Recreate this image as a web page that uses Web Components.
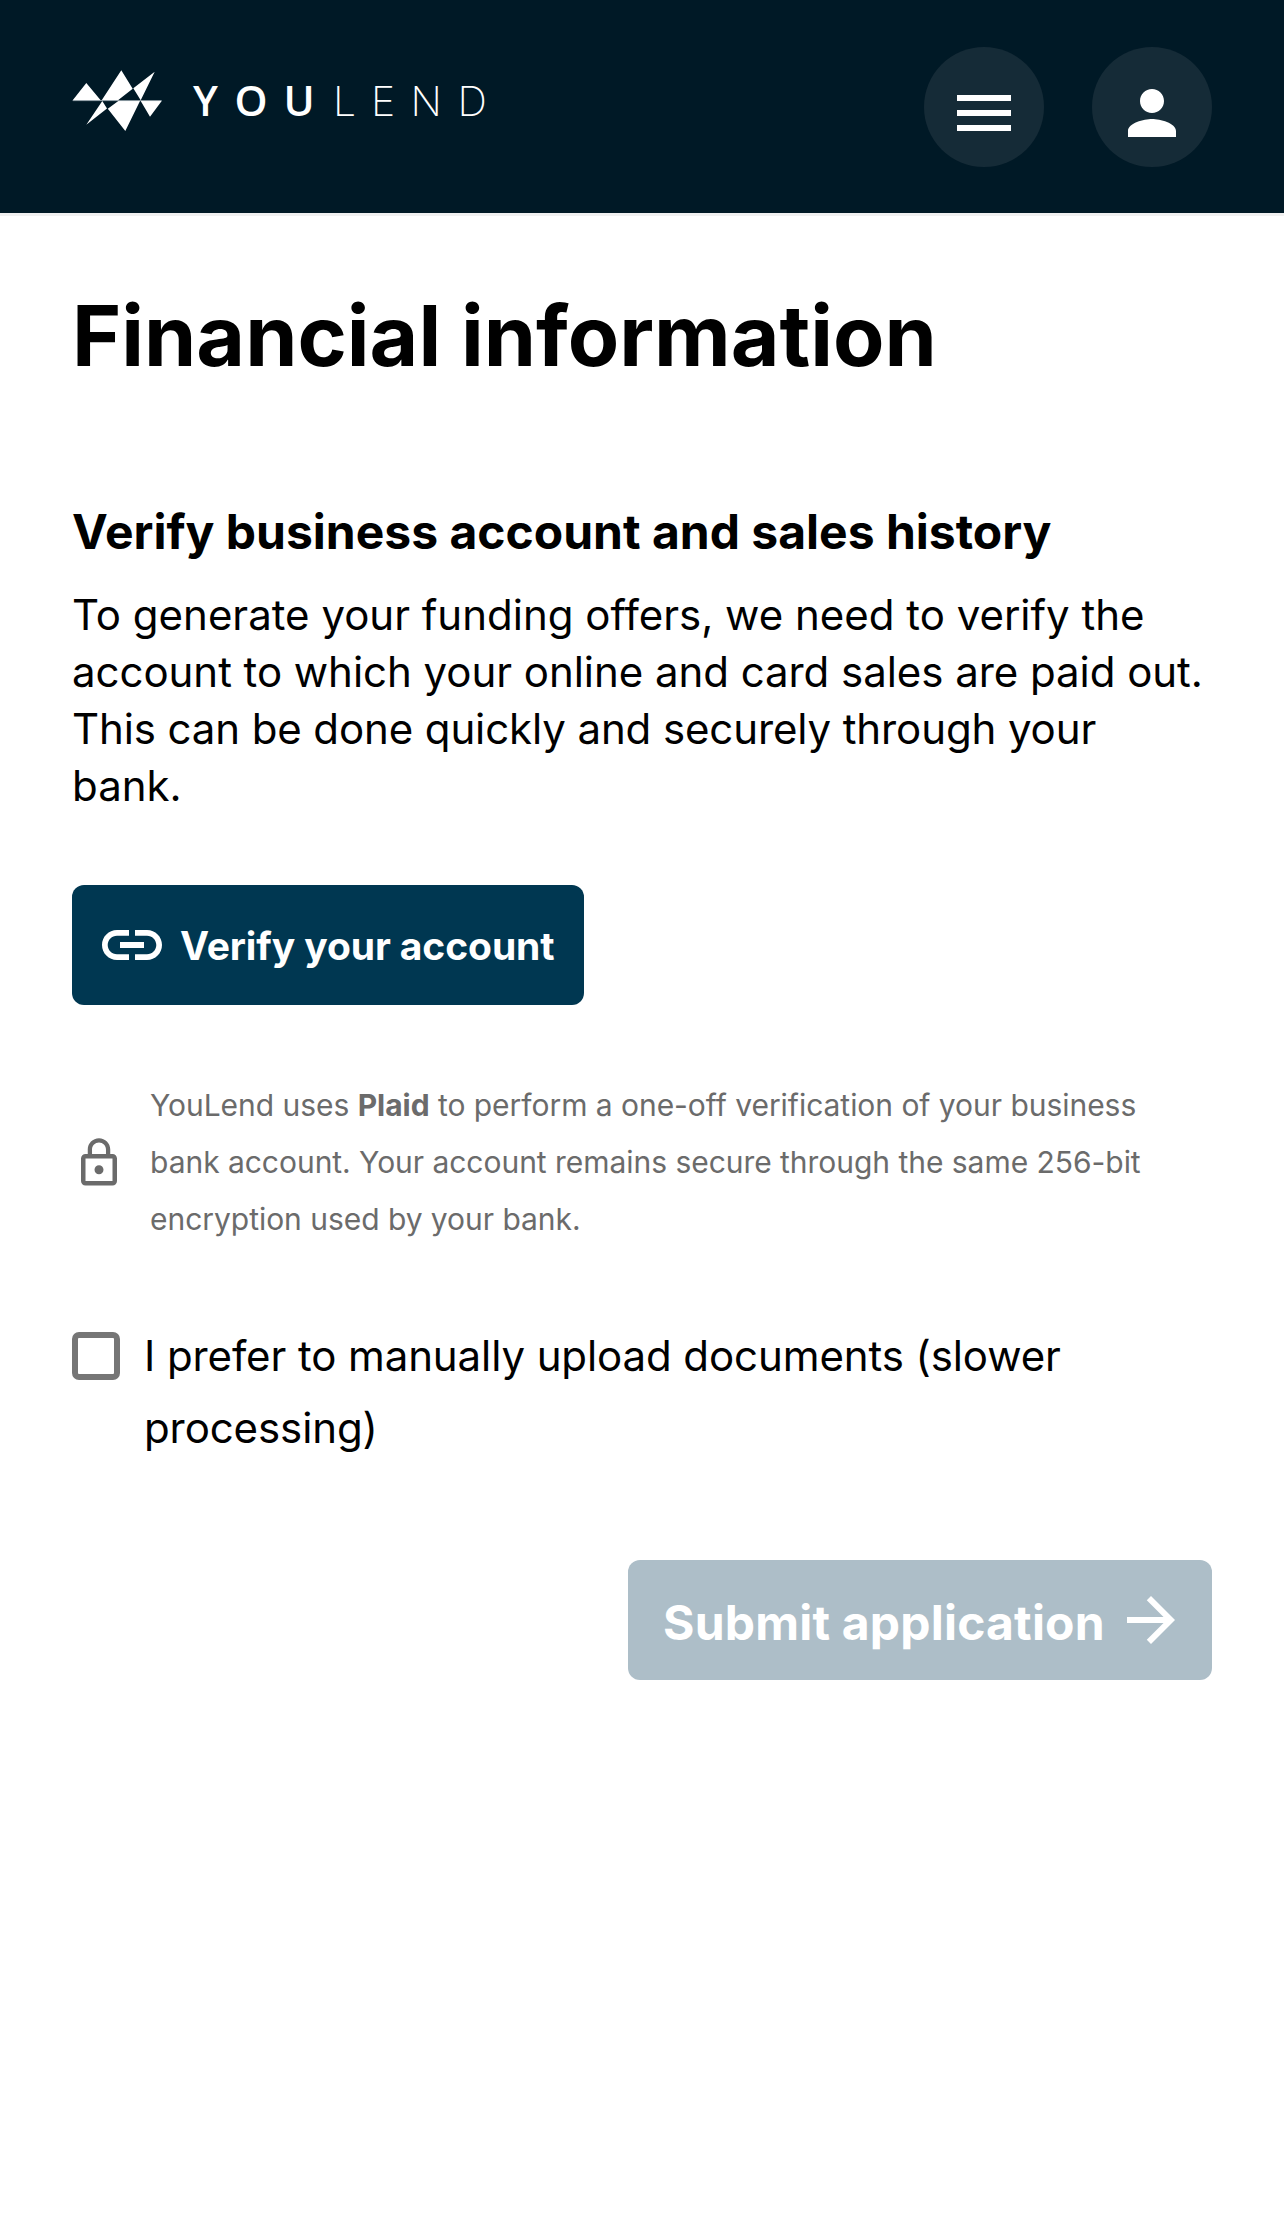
<!DOCTYPE html>
<html lang="en">
<head>
<meta charset="utf-8">
<title>Financial information</title>
<style>
html, body { margin: 0; background: #fff; }
body { font-family: Inter, "Liberation Sans", sans-serif; color: #000; min-height: 2238px; }
</style>
</head>
<body>
<yl-app></yl-app>
<script>
const define = (name, html) => customElements.define(name, class extends HTMLElement {
  constructor() {
    super();
    this.attachShadow({ mode: 'open' }).innerHTML = html;
  }
});

define('yl-logo', `
<style>:host{display:block;width:440px;height:72px} svg{display:block;fill:#fff}</style>
<svg width="440" height="72" viewBox="60 66 440 72" role="img" aria-label="YouLend">
  <path d="M72.7 100.3 86.3 83 100.7 100.3zM101.7 100.3 121.3 70.3 132.7 88.8 118 100.3zM133.3 88.3 154.7 71.7 140.7 100.3zM102.3 101 107 108.5 86.3 124.7zM107.8 108.7 118.3 101 140 101 125.3 131zM140.7 101 161.7 101 150 116.7z"/>
  <path d="M72.7 100.6H161.7" stroke="#b8c3c9" stroke-width=".8"/>
  <text y="115.5" x="193 234.500 283.500" font-family="Open Sans" font-size="42" font-weight="560">YOU</text>
  <text y="115.5" x="333 371 410.5 457.5" font-family="Inter" font-size="41" font-weight="200">LEND</text>
</svg>`);

define('yl-round-button', `
<style>:host{display:flex;box-sizing:border-box;width:120px;height:120px;padding-top:12px;border-radius:50%;background:#152b37;align-items:center;justify-content:center}</style>
<slot></slot>`);

const icons = {
  menu: 'M3 18h18v-2H3v2zm0-5h18v-2H3v2zm0-7v2h18V6H3z',
  person: 'M12 12c2.21 0 4-1.79 4-4s-1.79-4-4-4-4 1.79-4 4 1.79 4 4 4zm0 2c-2.67 0-8 1.34-8 4v2h16v-2c0-2.66-5.33-4-8-4z',
  link: 'M3.9 12c0-1.71 1.39-3.1 3.1-3.1h4V7H7c-2.76 0-5 2.24-5 5s2.24 5 5 5h4v-1.9H7c-1.71 0-3.1-1.39-3.1-3.1zM8 13h8v-2H8v2zm9-6h-4v1.9h4c1.71 0 3.1 1.39 3.1 3.1s-1.39 3.1-3.1 3.1h-4V17h4c2.76 0 5-2.24 5-5s-2.24-5-5-5z',
  lock: 'M12 17c1.1 0 2-.9 2-2s-.9-2-2-2-2 .9-2 2 .9 2 2 2zm6-9h-1V6c0-2.76-2.24-5-5-5S7 3.24 7 6v2H6c-1.1 0-2 .9-2 2v10c0 1.1.9 2 2 2h12c1.1 0 2-.9 2-2V10c0-1.1-.9-2-2-2zM8.9 6c0-1.71 1.39-3.1 3.1-3.1s3.1 1.39 3.1 3.1v2H8.9V6zM18 20H6V10h12v10z',
  arrow: 'M12 4l-1.41 1.41L16.17 11H4v2h12.17l-5.58 5.59L12 20l8-8z'
};
customElements.define('yl-icon', class extends HTMLElement {
  constructor() {
    super();
    this.attachShadow({ mode: 'open' });
  }
  connectedCallback() {
    this.shadowRoot.innerHTML = `<style>:host{display:block;flex:none;width:var(--size,72px);height:var(--size,72px)} svg{display:block;width:100%;height:100%;fill:currentColor}</style>
    <svg viewBox="0 0 24 24"><path d="${icons[this.getAttribute('name')]}"/></svg>`;
  }
});

define('yl-header', `
<style>:host{display:flex;box-sizing:border-box;height:216px;padding:47px 72px 0 60px;background:#001926;border-bottom:3px solid #f0f0f0;color:#fff;justify-content:space-between;align-items:flex-start}
yl-logo{margin-top:19px} nav{display:flex;gap:48px}</style>
<yl-logo></yl-logo>
<nav><yl-round-button><yl-icon name="menu"></yl-icon></yl-round-button><yl-round-button><yl-icon name="person"></yl-icon></yl-round-button></nav>`);

define('yl-button', `
<style>:host{display:flex;box-sizing:border-box;height:120px;border-radius:12px;align-items:center;color:#fff;font-weight:700;white-space:nowrap;width:max-content}</style>
<slot></slot>`);

define('yl-note', `
<style>:host{display:flex;align-items:center;gap:24px;color:#6b6b6b;font-size:30px;line-height:57px;letter-spacing:-.035px;font-weight:420} yl-icon{--size:54px}</style>
<yl-icon name="lock"></yl-icon><div><slot></slot></div>`);

define('yl-checkbox', `
<style>:host{display:flex;gap:24px;font-size:42px;line-height:72px;letter-spacing:-.1px} i{box-sizing:border-box;flex:none;width:48px;height:48px;margin-top:12px;border:6px solid #767676;border-radius:7px}</style>
<i></i><div><slot></slot></div>`);

define('yl-app', `
<style>
:host{display:block}
main{display:flex;flex-direction:column;padding:0 72px}
h1{margin:72px 0 0;font-size:84px;line-height:96px;font-weight:700}
h2{margin:118px 0 0;font-size:48px;line-height:60px;font-weight:700}
p{margin:24px 0 0;font-size:42px;line-height:57px}
.l2{letter-spacing:-.045px} .l3{letter-spacing:-.115px}
.verify{margin-top:71px;background:#003751;padding:0 30px 0 24px;gap:12px;font-size:39px;letter-spacing:-.1px;width:512px}
.verify span{padding-top:1px}
yl-note{margin-top:72px} yl-note span,yl-note b{letter-spacing:inherit}
b{font-weight:700}
yl-checkbox{margin-top:72px}
.submit{margin-top:96px;align-self:flex-end;background:#adbec8;padding:0 25px 0 35px;font-size:48px;letter-spacing:.2px;width:584px;justify-content:space-between}
.submit span{padding-top:4px}
</style>
<yl-header></yl-header>
<main>
<h1>Financial information</h1>
<h2>Verify business account and sales history</h2>
<p>To generate your funding offers, we need to verify the<br><span class="l2">account to which your online and card sales are paid out.</span><br><span class="l3">This can be done quickly and securely through your</span><br>bank.</p>
<yl-button class="verify"><yl-icon name="link"></yl-icon><span>Verify your account</span></yl-button>
<yl-note>YouLend uses <b>Plaid</b> to perform a one-off verification of your business<br>bank account. Your account remains secure through the same 256-bit<br>encryption used by your bank.</yl-note>
<yl-checkbox>I prefer to manually upload documents (slower<br>processing)</yl-checkbox>
<yl-button class="submit"><span>Submit application</span><yl-icon name="arrow"></yl-icon></yl-button>
</main>`);
</script>
</body>
</html>
